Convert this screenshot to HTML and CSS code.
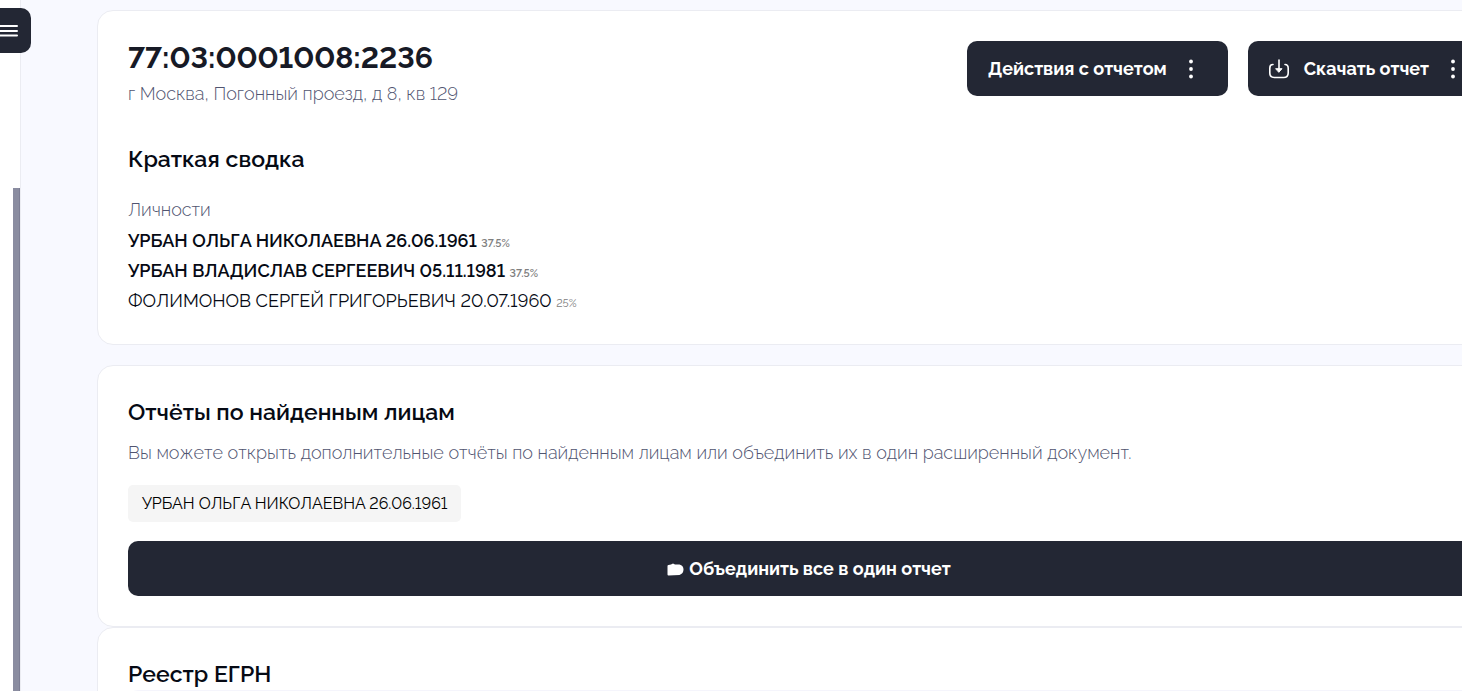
FILE: index.html
```
<!DOCTYPE html>
<html lang="ru">
<head>
<meta charset="utf-8">
<title>77:03:0001008:2236</title>
<link rel="stylesheet" href="styles.css">
</head>
<body>
<aside class="sidebar">
  <div class="sidebar-track"></div>
  <button class="menu-toggle" type="button" aria-label="Меню">
    <svg width="18" height="13" viewBox="0 0 18 13" aria-hidden="true"><path d="M0 2h17M0 7h17M0 11.500h17" fill="none" stroke="#fff" stroke-width="2" stroke-linecap="round"/></svg>
  </button>
</aside>
<main class="content">
  <section class="card card-summary">
    <header class="report-head">
      <div>
        <h1 class="report-title">77:03:0001008:2236</h1>
        <p class="address">г Москва, Погонный проезд, д 8, кв 129</p>
      </div>
      <div class="actions">
        <button class="btn" type="button">
          <span>Действия с отчетом</span>
          <svg class="dots" width="6" height="20" viewBox="0 0 6 20" aria-hidden="true"><circle cx="3" cy="2.500" r="1.900"/><circle cx="3" cy="10" r="1.900"/><circle cx="3" cy="17.500" r="1.900"/></svg>
        </button>
        <button class="btn" type="button">
          <svg class="download" width="20" height="20" viewBox="0 0 20 20" aria-hidden="true"><path d="M4 5.500C1.700 5.500.8 7 .8 9.200V14c0 3 1.700 4.500 4.500 4.500h9.400c2.800 0 4.500-1.500 4.500-4.500V9.200c0-2.200-.9-3.700-3.200-3.700M10 1v11.500"/><path d="M7 9.700h6L10 13z" class="download-head"/></svg>
          <span>Скачать отчет</span>
          <svg class="dots" width="6" height="20" viewBox="0 0 6 20" aria-hidden="true"><circle cx="3" cy="2.500" r="1.900"/><circle cx="3" cy="10" r="1.900"/><circle cx="3" cy="17.500" r="1.900"/></svg>
        </button>
      </div>
    </header>
    <h2 class="heading">Краткая сводка</h2>
    <h3 class="label">Личности</h3>
    <ul class="people">
      <li><strong>УРБАН ОЛЬГА НИКОЛАЕВНА 26.06.1961 <small class="share">37.5%</small></strong></li>
      <li><strong>УРБАН ВЛАДИСЛАВ СЕРГЕЕВИЧ 05.11.1981 <small class="share">37.5%</small></strong></li>
      <li>ФОЛИМОНОВ СЕРГЕЙ ГРИГОРЬЕВИЧ 20.07.1960 <small class="share">25%</small></li>
    </ul>
  </section>
  <section class="card">
    <h2 class="heading">Отчёты по найденным лицам</h2>
    <p class="description">Вы можете открыть дополнительные отчёты по найденным лицам или объединить их в один расширенный документ.</p>
    <button class="chip" type="button">УРБАН ОЛЬГА НИКОЛАЕВНА 26.06.1961</button>
    <button class="btn btn-merge" type="button">
      <svg class="folder" width="17" height="13" viewBox="0 0 17 13" aria-hidden="true"><path d="M.5 3Q.5 2 1.500 2L4 1.500 6 .500 8 1.500h4.500q4 1 4 5t-4 5.500L1.500 12.500Q.5 12.500.5 11.500z" fill="#fff"/></svg>
      <span>Объединить все в один отчет</span>
    </button>
  </section>
  <section class="card card-registry">
    <h2 class="heading">Реестр ЕГРН</h2>
    <div class="registry-body"></div>
  </section>
</main>
</body>
</html>
```
FILE: styles.css
```
* {
  box-sizing: border-box;
}

body {
  margin: 0;
  display: flex;
  height: 100vh;
  overflow: hidden;
  background: #f8f9ff;
  color: #060a14;
  font: 18px/24px Raleway, Lato, "Open Sans", sans-serif;
  font-variant-numeric: lining-nums;
}

h1, h2, h3, p, ul {
  margin: 0;
  padding: 0;
}

button {
  border: 0;
  font: inherit;
  font-variant-numeric: lining-nums;
  cursor: pointer;
}

strong {
  font-weight: 600;
}

.sidebar {
  position: relative;
  flex: 0 0 21px;
  display: flex;
  justify-content: flex-end;
  padding-top: 188px;
  background: #fff;
  border-right: 1px solid #ebecf2;
}

.sidebar-track {
  width: 7px;
  background: #8a8ca0;
  border-right: 1px solid #7c7d94;
}

.menu-toggle {
  position: absolute;
  top: 8px;
  left: 0;
  width: 31px;
  height: 45px;
  padding: 0;
  display: flex;
  align-items: center;
  background: #232734;
  border-radius: 0 10px 10px 0;
}

/* The content column runs past the right edge of the window. */
.content {
  flex: 1 0 auto;
  width: calc(100% + 38px);
  max-width: calc(100% + 38px);
  padding: 10px 0 0 76px;
}

.card {
  padding: 30px;
  background: #fff;
  border: 1px solid #ebecf2;
  border-radius: 16px;
}

.card-summary {
  padding-bottom: 28px;
  margin-bottom: 20px;
}

.report-head {
  display: flex;
  justify-content: space-between;
  align-items: flex-start;
  margin-bottom: 37px;
}

.report-title {
  font-size: 30px;
  line-height: 34px;
  font-weight: 700;
  color: #171a26;
  margin-bottom: 7px;
}

.address,
.label,
.description {
  color: #505470;
  font-weight: 300;
}

.actions {
  display: flex;
  gap: 20px;
}

.btn {
  display: flex;
  align-items: center;
  height: 55px;
  padding: 0 34px 0 21px;
  background: #232734;
  color: #fff;
  font-weight: 700;
  border-radius: 10px;
}

.dots {
  margin-left: 21px;
  fill: #fff;
}

.download {
  margin-right: 15px;
  fill: none;
  stroke: #fff;
  stroke-width: 1.6;
  stroke-linecap: round;
  stroke-linejoin: round;
}

.download-head {
  fill: #fff;
  stroke-width: 1;
}

.heading {
  font-size: 23px;
  line-height: 32px;
  font-weight: 600;
}

.label {
  margin-top: 19px;
  font-size: 18px;
  line-height: 32px;
}

.people {
  list-style: none;
  line-height: 30px;
}

.share {
  font-size: 11px;
  line-height: 12px;
  color: #808080;
}

.description {
  margin: 13px 0 20px;
}

.chip {
  display: block;
  height: 37px;
  margin-bottom: 19px;
  padding: 0 14px;
  background: #f5f5f5;
  color: #000;
  font-size: 16px;
  border-radius: 5px;
}

.btn-merge {
  width: 100%;
  justify-content: center;
  gap: 5px;
  padding: 0 20px;
}

.folder {
  margin-top: 2px;
}

.card-registry {
  min-height: 200px;
}

.registry-body {
  height: 100px;
  border: 1px solid #f5f5fc;
  border-radius: 10px;
}
```
